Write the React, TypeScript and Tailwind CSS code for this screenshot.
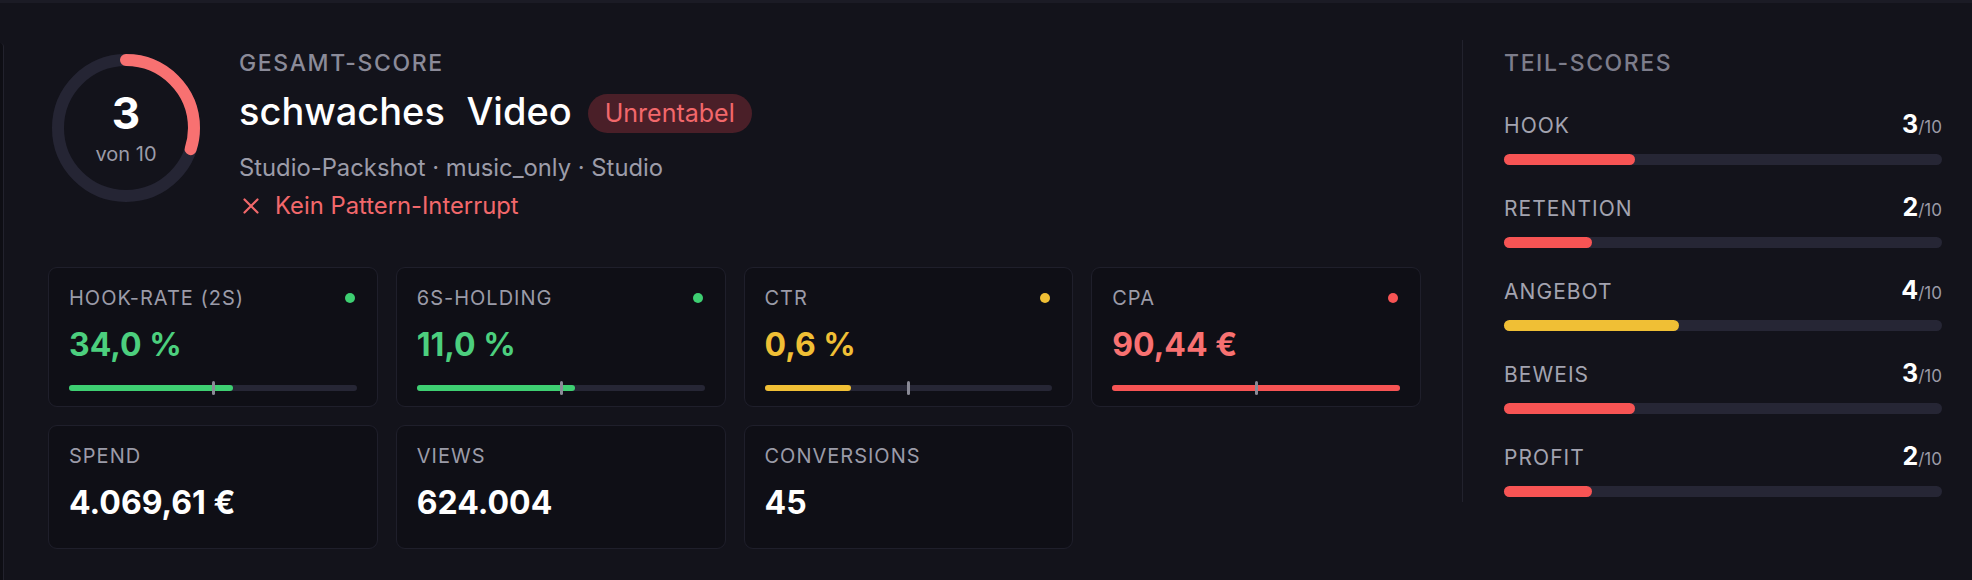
import React from "react";

const metrics = [
  { label: "HOOK-RATE (2S)", value: "34,0 %", color: "text-[#4ccf7e]", dot: "bg-[#3ecf72]", bar: "bg-[#3ecf72]", fill: 57 },
  { label: "6S-HOLDING", value: "11,0 %", color: "text-[#4ccf7e]", dot: "bg-[#3ecf72]", bar: "bg-[#3ecf72]", fill: 55 },
  { label: "CTR", value: "0,6 %", color: "text-[#f0bf35]", dot: "bg-[#f0bf35]", bar: "bg-[#f0bf35]", fill: 30 },
  { label: "CPA", value: "90,44 €", color: "text-[#f87171]", dot: "bg-[#f75454]", bar: "bg-[#f75454]", fill: 100 },
];

const stats = [
  { label: "SPEND", value: "4.069,61 €" },
  { label: "VIEWS", value: "624.004" },
  { label: "CONVERSIONS", value: "45" },
];

const parts = [
  { label: "HOOK", score: 3, bar: "bg-[#f75454]" },
  { label: "RETENTION", score: 2, bar: "bg-[#f75454]" },
  { label: "ANGEBOT", score: 4, bar: "bg-[#f0bf35]" },
  { label: "BEWEIS", score: 3, bar: "bg-[#f75454]" },
  { label: "PROFIT", score: 2, bar: "bg-[#f75454]" },
];

function Ring() {
  const r = 68;
  const c = 2 * Math.PI * r;
  return (
    <div className="relative w-[148px] h-[148px] shrink-0">
      <svg width="148" height="148" viewBox="0 0 148 148">
        <circle cx="74" cy="74" r={r} fill="none" stroke="#252534" strokeWidth="12" />
        <circle
          cx="74"
          cy="74"
          r={r}
          fill="none"
          stroke="#f87171"
          strokeWidth="12"
          strokeLinecap="round"
          strokeDasharray={`${c * 0.3} ${c}`}
          transform="rotate(-90 74 74)"
        />
      </svg>
      <div className="absolute inset-0 flex flex-col items-center pt-[37px]">
        <div className="text-[44px] leading-[44px] font-bold text-white">3</div>
        <div className="text-[20px] leading-[24px] text-[#9b9ba8] mt-[7px]">von 10</div>
      </div>
    </div>
  );
}

export default function App() {
  return (
    <div
      className="w-[1972px] h-[580px] bg-[#13131b] overflow-hidden flex flex-col"
      style={{ fontFamily: "Inter, 'Noto Sans', sans-serif" }}
    >
      <div className="h-[3px] bg-[#1b1b25] shrink-0" />
      <div className="flex flex-1 relative">
        <div className="absolute left-0 top-[40px] bottom-0 w-[4px] bg-[#0e0e14] border-r border-[#22222d] rounded-tr-[4px]" />
        {/* left column */}
        <div className="flex flex-col pl-[48px] pt-[46px] w-[1421px] shrink-0">
          <div className="flex items-start">
            <div className="ml-[4px] mt-[5px]">
              <Ring />
            </div>
            <div className="ml-[39px] flex flex-col">
              <div className="text-[23px] leading-[28px] font-medium tracking-[0.07em] text-[#8b8b99]">GESAMT-SCORE</div>
              <div className="flex items-start mt-[11px] h-[46px]">
                <div className="text-[38px] leading-[46px] font-medium text-white [word-spacing:0.3em]">
                  schwaches Video
                </div>
                <div className="ml-[16px] mt-[6px] h-[39px] px-[17px] rounded-full bg-[#4a1f28] text-[#f2686b] text-[25px] flex items-center">
                  Unrentabel
                </div>
              </div>
              <div className="mt-[20px] text-[23.8px] leading-[28px] text-[#9c9ca9]">
                Studio-Packshot · music_only · Studio
              </div>
              <div className="mt-[10px] text-[23.8px] leading-[28px] text-[#f2686b] flex items-center">
                <svg width="16" height="16" viewBox="0 0 16 16" className="ml-[4px] mr-[16px]">
                  <path d="M1.5 1.5 L14.5 14.5 M14.5 1.5 L1.5 14.5" stroke="#f2686b" strokeWidth="2.2" strokeLinecap="round" />
                </svg>
                Kein Pattern-Interrupt
              </div>
            </div>
          </div>

          <div className="grid grid-cols-4 gap-x-[18px] gap-y-[18px] mt-[47px]">
            {metrics.map((m) => (
              <div
                key={m.label}
                className="h-[140px] rounded-[9px] border border-[#1f1f2b] bg-[#0f0f16] px-[20px] pt-[16px]"
              >
                <div className="flex items-center justify-between">
                  <div className="text-[20px] leading-[28px] tracking-[0.05em] text-[#9b9ba8]">{m.label}</div>
                  <div className={`w-[10px] h-[10px] rounded-full mr-[2px] ${m.dot}`} />
                </div>
                <div className={`mt-[13px] text-[32px] leading-[40px] font-bold ${m.color}`}>{m.value}</div>
                <div className="relative mt-[20px] h-[6px] rounded-full bg-[#262635]">
                  <div className={`h-full rounded-full ${m.bar}`} style={{ width: `${m.fill}%` }} />
                  <div className="absolute left-1/2 top-[-4px] w-[3px] h-[14px] -ml-[1px] rounded-full bg-[#8a8a96]" />
                </div>
              </div>
            ))}
            {stats.map((s) => (
              <div
                key={s.label}
                className="h-[124px] rounded-[9px] border border-[#1f1f2b] bg-[#0f0f16] px-[20px] pt-[16px]"
              >
                <div className="text-[20px] leading-[28px] tracking-[0.05em] text-[#9b9ba8]">{s.label}</div>
                <div className="mt-[13px] text-[32px] leading-[40px] font-bold text-white">{s.value}</div>
              </div>
            ))}
          </div>
        </div>

        {/* divider */}
        <div className="ml-[41px] mt-[37px] h-[462px] w-px bg-[#22222d] shrink-0" />

        {/* right column */}
        <div className="ml-[41px] w-[438px] pt-[46px] flex flex-col shrink-0">
          <div className="text-[23px] leading-[28px] font-medium tracking-[0.07em] text-[#7d7d8b]">TEIL-SCORES</div>
          <div className="mt-[33px] flex flex-col gap-[28px]">
            {parts.map((p) => (
              <div key={p.label} className="flex flex-col">
                <div className="flex items-baseline justify-between h-[28px]">
                  <div className="text-[21px] leading-[28px] tracking-[0.05em] text-[#a3a3b0]">{p.label}</div>
                  <div className="leading-[28px]">
                    <span className="text-[25px] font-bold text-white">{p.score}</span>
                    <span className="text-[17px] text-[#9b9ba8]">/10</span>
                  </div>
                </div>
                <div className="mt-[16px] h-[11px] rounded-full bg-[#262635]">
                  <div className={`h-full rounded-full ${p.bar}`} style={{ width: `${p.score * 10}%` }} />
                </div>
              </div>
            ))}
          </div>
        </div>
      </div>
    </div>
  );
}
